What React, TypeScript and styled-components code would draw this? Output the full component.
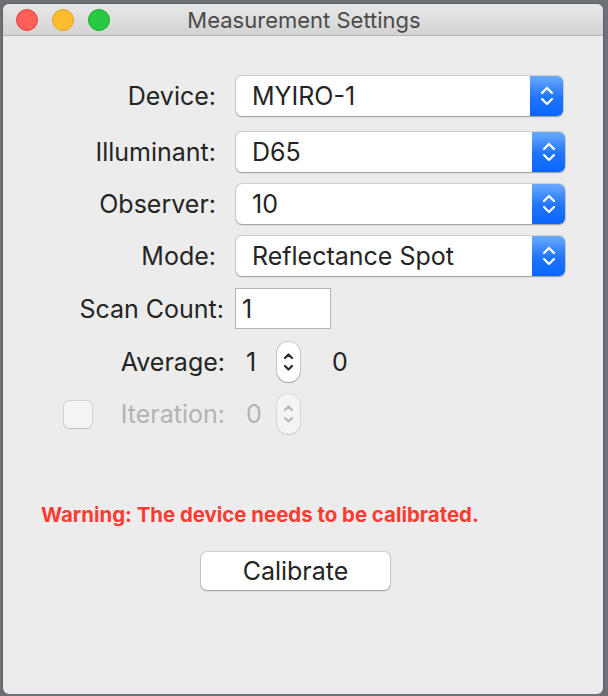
import React from "react";
import styled, { createGlobalStyle } from "styled-components";

const GlobalStyle = createGlobalStyle`
	html, body {
		margin: 0;
		padding: 0;
		background: #6d7074;
		font-family: Inter, "Noto Sans", "Liberation Sans", sans-serif;
	}
`;

type LightProps = { $fill: string; $edge: string };

const popups = [
	{ label: "Device:", value: "MYIRO-1", width: 327, extra: 4 },
	{ label: "Illuminant:", value: "D65", width: 329 },
	{ label: "Observer:", value: "10", width: 329 },
	{ label: "Mode:", value: "Reflectance Spot", width: 329 },
];

const PopupChevrons = () => (
	<svg width="14" height="26" viewBox="0 0 14 26" fill="none">
		<path d="M2 10 L7 5 L12 10" stroke="#fff" strokeWidth="2.2" strokeLinecap="round" strokeLinejoin="round" />
		<path d="M2 16 L7 21 L12 16" stroke="#fff" strokeWidth="2.2" strokeLinecap="round" strokeLinejoin="round" />
	</svg>
);

const StepperChevrons = ({ color }: { color: string }) => (
	<svg width="11" height="26" viewBox="0 0 11 26" fill="none">
		<path d="M2 9 L5.5 5.5 L9 9" stroke={color} strokeWidth="2.2" strokeLinecap="round" strokeLinejoin="round" />
		<path d="M2 17 L5.5 20.5 L9 17" stroke={color} strokeWidth="2.2" strokeLinecap="round" strokeLinejoin="round" />
	</svg>
);

export default function App() {
	return (
		<>
			<GlobalStyle />
			<Window>
				<TitleBar>
					<Lights>
						<Light $fill="#fe5f57" $edge="#e0443e" />
						<Light $fill="#febc2e" $edge="#dea123" />
						<Light $fill="#28c840" $edge="#1aab29" />
					</Lights>
					<Title>Measurement Settings</Title>
				</TitleBar>

				<Content>
					<Form>
						{popups.map(p => (
							<Row key={p.label} $height={40} $extra={p.extra}>
								<Label $end={213}>{p.label}</Label>
								<Popup $width={p.width}>
									<PopupValue>{p.value}</PopupValue>
									<PopupArrows>
										<PopupChevrons />
									</PopupArrows>
								</Popup>
							</Row>
						))}

						<Row $height={41}>
							<Label $end={221}>Scan Count:</Label>
							<TextField>1</TextField>
						</Row>

						<Row $height={41}>
							<Label $end={222}>Average:</Label>
							<Value>1</Value>
							<Stepper>
								<StepperChevrons color="#2b2b2b" />
							</Stepper>
							<Trailing>0</Trailing>
						</Row>

						<Row $height={40}>
							<Label $end={222}>
								<Checkbox />
								<Dim>Iteration:</Dim>
							</Label>
							<Value $disabled>0</Value>
							<Stepper $disabled>
								<StepperChevrons color="#b8b8b8" />
							</Stepper>
						</Row>
					</Form>

					<Warning>Warning: The device needs to be calibrated.</Warning>

					<ButtonRow>
						<Button>Calibrate</Button>
					</ButtonRow>
				</Content>
			</Window>
		</>
	);
}

const Window = styled.div`
	margin: 4px 0 0 3px;
	width: 600px;
	height: 690px;
	background: #ececec;
	border-radius: 6px;
	overflow: hidden;
	display: flex;
	flex-direction: column;
	box-shadow: 0 0 0 1px rgba(0, 0, 0, 0.12);
`;

const TitleBar = styled.div`
	position: relative;
	height: 31px;
	flex-shrink: 0;
	display: flex;
	align-items: center;
	justify-content: center;
	background: linear-gradient(#e8e8e8, #d3d3d3);
	border-bottom: 1px solid #b4b4b4;
`;

const Lights = styled.div`
	position: absolute;
	left: 13px;
	top: 5px;
	display: flex;
	gap: 14px;
`;

const Light = styled.span<LightProps>`
	width: 22px;
	height: 22px;
	box-sizing: border-box;
	border-radius: 50%;
	background: ${p => p.$fill};
	border: 1px solid ${p => p.$edge};
`;

const Title = styled.div`
	font-size: 22px;
	color: #4b4b4b;
	padding-left: 2px;
`;

const Content = styled.div`
	display: flex;
	flex-direction: column;
	padding-top: 40px;
`;

const Form = styled.div`
	display: flex;
	flex-direction: column;
	gap: 12px;
`;

const Row = styled.div<{ $height: number; $extra?: number }>`
	display: flex;
	align-items: center;
	height: ${p => p.$height}px;
	margin-bottom: ${p => p.$extra ?? 0}px;
`;

const Label = styled.div<{ $end: number }>`
	width: ${p => p.$end}px;
	flex-shrink: 0;
	display: flex;
	align-items: center;
	justify-content: flex-end;
	font-size: 25px;
	color: #242424;
	white-space: nowrap;
`;

const Dim = styled.span`
	color: #b3b3b3;
`;

const Popup = styled.div<{ $width: number }>`
	margin-left: 20px;
	width: ${p => p.$width}px;
	height: 40px;
	display: flex;
	background: #fff;
	border-radius: 6px;
	overflow: hidden;
	box-shadow: 0 0 0 1px rgba(0, 0, 0, 0.12), 0 1px 1.5px rgba(0, 0, 0, 0.25);
`;

const PopupValue = styled.div`
	flex: 1;
	display: flex;
	align-items: center;
	padding-left: 16px;
	font-size: 25px;
	color: #242424;
`;

const PopupArrows = styled.div`
	width: 33px;
	display: flex;
	align-items: center;
	justify-content: center;
	background: linear-gradient(#6aa9ff, #1e74fd 55%, #0a66fb);
`;

const TextField = styled.div`
	margin-left: 11px;
	width: 96px;
	height: 41px;
	box-sizing: border-box;
	border: 1px solid #b4b4b4;
	background: #fff;
	display: flex;
	align-items: center;
	padding-left: 6px;
	font-size: 25px;
	color: #242424;
`;

const Value = styled.div<{ $disabled?: boolean }>`
	margin-left: 21px;
	width: 31px;
	font-size: 25px;
	color: ${p => (p.$disabled ? "#b3b3b3" : "#242424")};
`;

const Trailing = styled.div`
	margin-left: 32px;
	font-size: 25px;
	color: #242424;
`;

const Stepper = styled.div<{ $disabled?: boolean }>`
	width: 23px;
	height: 40px;
	border-radius: 11px;
	background: ${p => (p.$disabled ? "#f4f4f4" : "#fff")};
	display: flex;
	align-items: center;
	justify-content: center;
	box-shadow: 0 0 0 1px rgba(0, 0, 0, ${p => (p.$disabled ? 0.08 : 0.14)}),
		0 1px 1px rgba(0, 0, 0, ${p => (p.$disabled ? 0.08 : 0.2)});
`;

const Checkbox = styled.span`
	width: 28px;
	height: 27px;
	margin-right: auto;
	margin-left: 61px;
	box-sizing: border-box;
	border-radius: 5px;
	background: #f4f4f4;
	box-shadow: 0 0 0 1px rgba(0, 0, 0, 0.1), 0 1px 1px rgba(0, 0, 0, 0.08);
`;

const Warning = styled.div`
	margin-top: 68px;
	padding-left: 38px;
	font-size: 20.4px;
	font-weight: 700;
	color: #fd3b30;
`;

const ButtonRow = styled.div`
	display: flex;
	padding-left: 198px;
	margin-top: 25px;
`;

const Button = styled.div`
	width: 189px;
	height: 38px;
	display: flex;
	align-items: center;
	justify-content: center;
	background: #fff;
	border-radius: 6px;
	font-size: 25px;
	color: #242424;
	box-shadow: 0 0 0 1px rgba(0, 0, 0, 0.12), 0 1px 1.5px rgba(0, 0, 0, 0.25);
`;
